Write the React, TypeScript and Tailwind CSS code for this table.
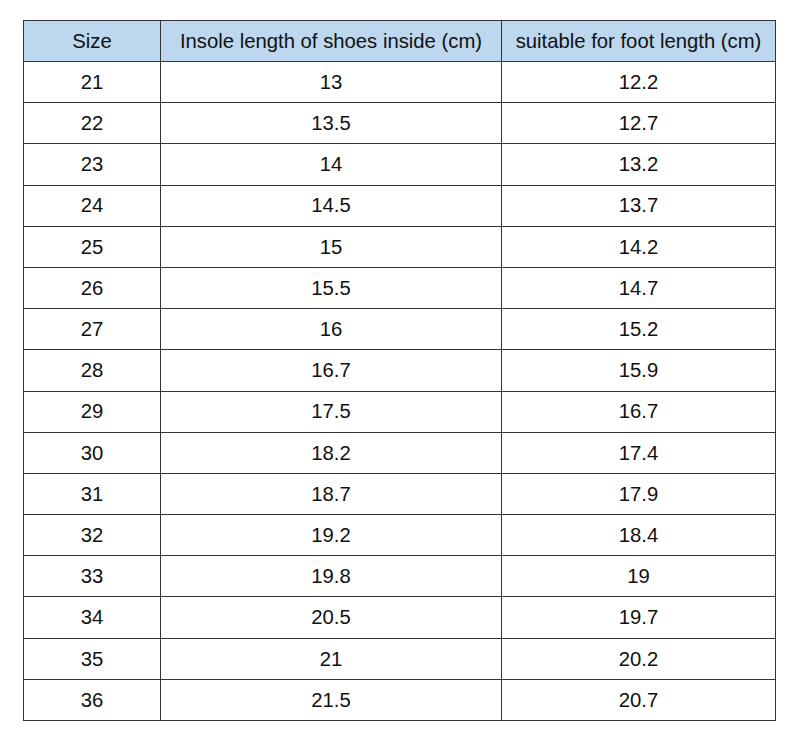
const rows: [string, string, string][] = [
  ['21', '13', '12.2'],
  ['22', '13.5', '12.7'],
  ['23', '14', '13.2'],
  ['24', '14.5', '13.7'],
  ['25', '15', '14.2'],
  ['26', '15.5', '14.7'],
  ['27', '16', '15.2'],
  ['28', '16.7', '15.9'],
  ['29', '17.5', '16.7'],
  ['30', '18.2', '17.4'],
  ['31', '18.7', '17.9'],
  ['32', '19.2', '18.4'],
  ['33', '19.8', '19'],
  ['34', '20.5', '19.7'],
  ['35', '21', '20.2'],
  ['36', '21.5', '20.7'],
];

export default function App() {
  return (
    <main
      className="w-[800px] h-[743px] bg-white pt-[20px] pl-[23px]"
      style={{ fontFamily: '"Liberation Sans", Arial, sans-serif' }}
    >
      <table className="border-collapse text-[20.3px] text-[#111] table-fixed w-[752px]">
        <colgroup>
          <col className="w-[137px]" />
          <col className="w-[341px]" />
          <col className="w-[274px]" />
        </colgroup>
        <thead>
          <tr className="h-[41px] bg-[#bdd7ee]">
            <th className="border border-[#333] font-normal text-center">Size</th>
            <th className="border border-[#333] font-normal text-center">Insole length of shoes inside (cm)</th>
            <th className="border border-[#333] font-normal text-center">suitable for foot length (cm)</th>
          </tr>
        </thead>
        <tbody>
          {rows.map(([size, insole, foot]) => (
            <tr key={size} className="h-[41.2px]">
              <td className="border border-[#333] text-center">{size}</td>
              <td className="border border-[#333] text-center">{insole}</td>
              <td className="border border-[#333] text-center">{foot}</td>
            </tr>
          ))}
        </tbody>
      </table>
    </main>
  );
}
